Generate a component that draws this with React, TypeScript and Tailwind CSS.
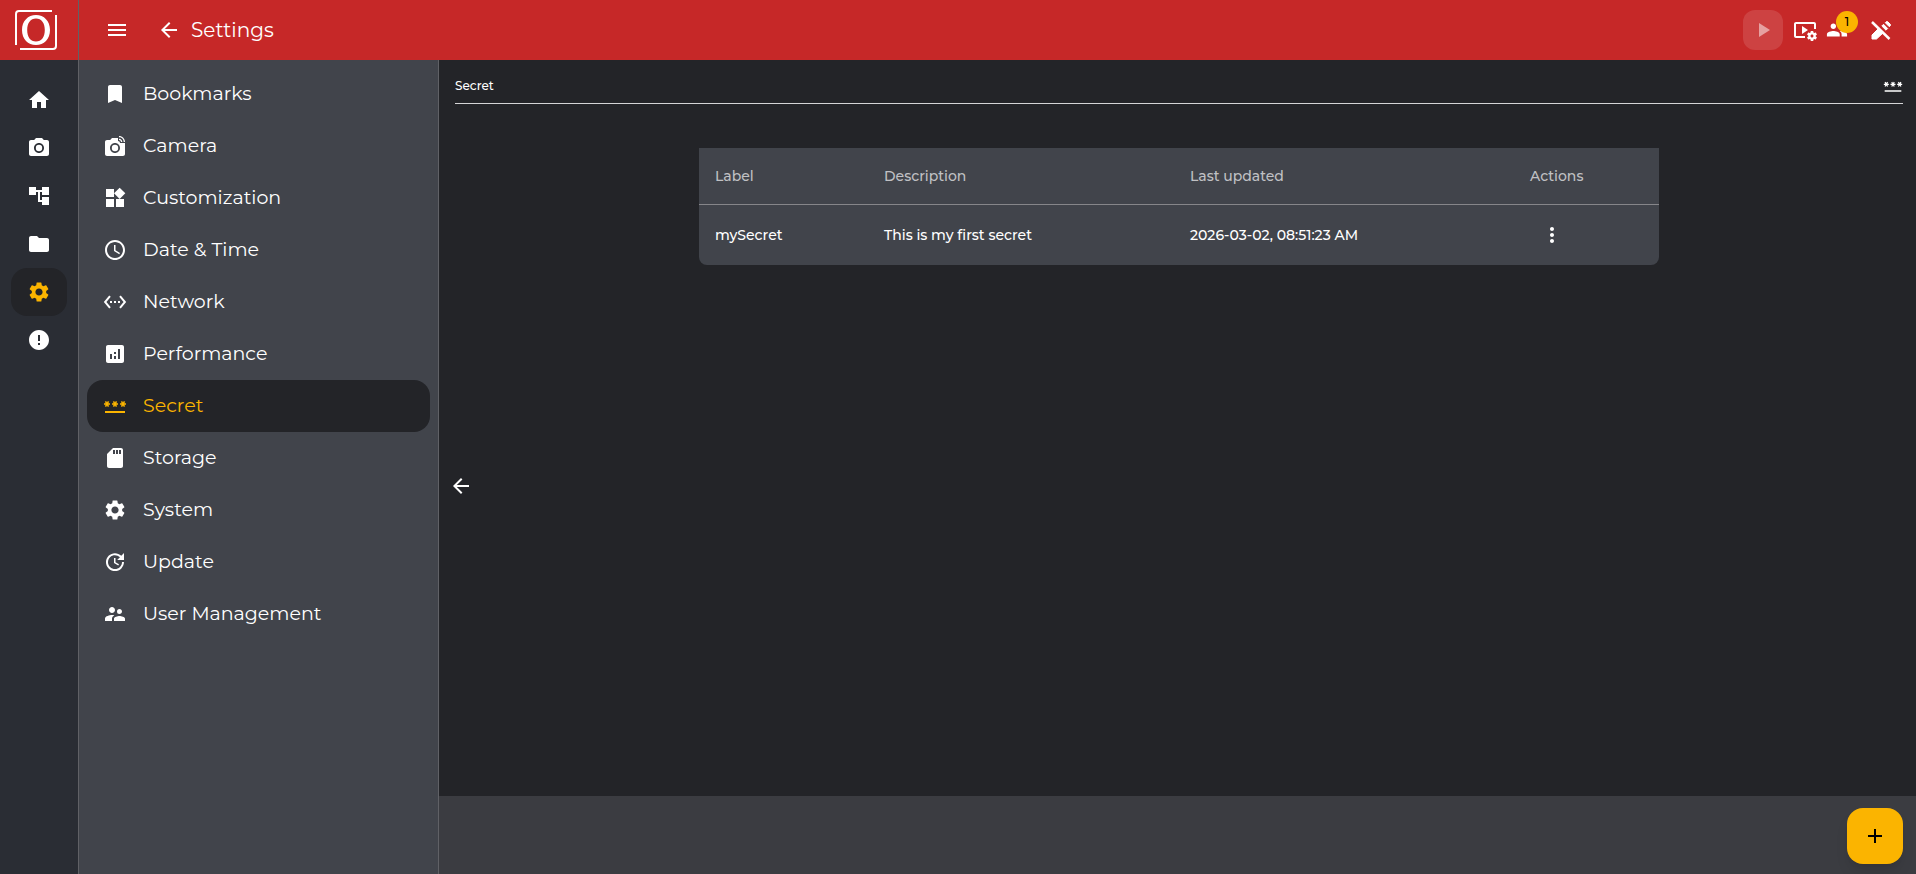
import type { IconType } from 'react-icons';
import {
    MdAccountTree,
    MdAdd,
    MdAnalytics,
    MdArrowBack,
    MdBookmark,
    MdError,
    MdFolder,
    MdGroup,
    MdHome,
    MdLinkedCamera,
    MdMenu,
    MdMoreVert,
    MdPassword,
    MdPhotoCamera,
    MdPlayArrow,
    MdSchedule,
    MdSdCard,
    MdSettings,
    MdSettingsEthernet,
    MdSupervisorAccount,
    MdUpdate,
    MdVideoSettings,
    MdWidgets,
} from 'react-icons/md';

type Item = { label: string; icon: IconType; active?: boolean };

const railItems: Item[] = [
    { label: 'Home', icon: MdHome },
    { label: 'Capture', icon: MdPhotoCamera },
    { label: 'Flows', icon: MdAccountTree },
    { label: 'Files', icon: MdFolder },
    { label: 'Settings', icon: MdSettings, active: true },
    { label: 'Alerts', icon: MdError },
];

const menuItems: Item[] = [
    { label: 'Bookmarks', icon: MdBookmark },
    { label: 'Camera', icon: MdLinkedCamera },
    { label: 'Customization', icon: MdWidgets },
    { label: 'Date & Time', icon: MdSchedule },
    { label: 'Network', icon: MdSettingsEthernet },
    { label: 'Performance', icon: MdAnalytics },
    { label: 'Secret', icon: MdPassword, active: true },
    { label: 'Storage', icon: MdSdCard },
    { label: 'System', icon: MdSettings },
    { label: 'Update', icon: MdUpdate },
    { label: 'User Management', icon: MdSupervisorAccount },
];

const secrets = [
    { label: 'mySecret', description: 'This is my first secret', updated: '2026-03-02, 08:51:23 AM' },
];

function Logo() {
    return (
        <svg viewBox="0 0 42 40" className="w-[42px] h-10" fill="none" stroke="white" strokeWidth="2" aria-hidden="true">
            <path d="M37 1H4a3 3 0 0 0-3 3v31" />
            <path d="M5 39h33a3 3 0 0 0 3-3V5" />
            <path
                fill="white"
                stroke="none"
                fillRule="evenodd"
                d="M21 5c8 0 14 6 14 15s-6 15-14 15S7 29 7 20 13 5 21 5zm0 3.500c-5.500 0-8.800 4.500-8.800 11.500s3.300 11.500 8.800 11.500 8.800-4.500 8.800-11.500S26.500 8.500 21 8.500z"
            />
        </svg>
    );
}

function PencilOffIcon() {
    return (
        <svg viewBox="0 0 24 24" className="w-6 h-6" fill="currentColor" stroke="currentColor" strokeLinejoin="round" aria-hidden="true">
            <path d="M3 17l6.500-6.500 4.500 4.500L7.500 21H3z" strokeWidth="1" />
            <path d="M12.800 8l1.700-1.700 4.200 4.200-1.700 1.700z" strokeWidth="1" />
            <path d="M16.300 4.700l1-1c.4-.4 1-.4 1.400 0l2.600 2.600c.4.4.4 1 0 1.400l-1 1z" strokeWidth="1" />
            <path d="M3 4l17.500 17" fill="none" strokeWidth="2.500" />
        </svg>
    );
}

function Rail() {
    return (
        <aside className="w-[79px] shrink-0 flex flex-col bg-[#2a2d34] border-r border-[#606166]">
            <div className="h-[60px] shrink-0 flex items-center pl-[15px] bg-[#c62828]">
                <Logo />
            </div>
            <nav className="flex flex-col items-center pt-4">
                {railItems.map(({ label, icon: Icon, active }) => (
                    <a
                        key={label}
                        href="#"
                        aria-label={label}
                        className={`w-14 h-12 flex items-center justify-center rounded-2xl ${active ? 'bg-[#232428] text-[#fbb400]' : 'text-white'}`}
                    >
                        <Icon size={24} />
                    </a>
                ))}
            </nav>
        </aside>
    );
}

function TopBar() {
    return (
        <header className="h-[60px] shrink-0 flex items-center bg-[#c62828] text-white pl-[26px] pr-[23px]">
            <button type="button" aria-label="Menu">
                <MdMenu size={24} />
            </button>
            <a href="#" aria-label="Back" className="ml-7">
                <MdArrowBack size={24} />
            </a>
            <h1 className="ml-[10px] text-xl leading-6">Settings</h1>
            <div className="ml-auto flex items-center">
                <button
                    type="button"
                    disabled
                    aria-label="Run"
                    className="w-10 h-10 flex items-center justify-center rounded-xl bg-white/12 text-white/50"
                >
                    <MdPlayArrow size={24} />
                </button>
                <button type="button" aria-label="Video settings" className="ml-[10px]">
                    <MdVideoSettings size={24} />
                </button>
                <button type="button" aria-label="Users" className="relative ml-[9px]">
                    <MdGroup size={22} />
                    <span className="absolute -top-2 left-[10px] w-[22px] h-[22px] flex items-center justify-center rounded-full bg-[#fbb400] text-black text-xs font-medium">
                        1
                    </span>
                </button>
                <button type="button" aria-label="Leave edit mode" className="ml-[21px]">
                    <PencilOffIcon />
                </button>
            </div>
        </header>
    );
}

function SideMenu() {
    return (
        <nav className="w-[360px] shrink-0 px-2 pt-2 bg-[#41444b] border-r border-[#606166]">
            {menuItems.map(({ label, icon: Icon, active }) => (
                <a
                    key={label}
                    href="#"
                    className={`h-[52px] flex items-center gap-4 pl-4 rounded-2xl text-[19px] leading-6 ${active ? 'bg-[#232428] text-[#fbb400]' : 'text-white'}`}
                >
                    <Icon size={24} />
                    {label}
                </a>
            ))}
        </nav>
    );
}

function SecretTable() {
    return (
        <table className="w-[960px] table-fixed mx-auto mt-11 bg-[#41444b] rounded-b-lg text-left text-sm font-medium text-white">
            <colgroup>
                <col className="w-[169px]" />
                <col className="w-[306px]" />
                <col className="w-[340px]" />
                <col className="w-[145px]" />
            </colgroup>
            <thead>
                <tr className="h-14 border-b border-[#86868a] text-[#c0c1c4]">
                    <th className="px-4 font-medium">Label</th>
                    <th className="px-4 font-medium">Description</th>
                    <th className="px-4 font-medium">Last updated</th>
                    <th className="px-4 font-medium">Actions</th>
                </tr>
            </thead>
            <tbody>
                {secrets.map((secret) => (
                    <tr key={secret.label} className="h-[61px]">
                        <td className="px-4">{secret.label}</td>
                        <td className="px-4">{secret.description}</td>
                        <td className="px-4">{secret.updated}</td>
                        <td className="px-4">
                            <button type="button" aria-label="More actions" className="ml-[10px] block">
                                <MdMoreVert size={24} />
                            </button>
                        </td>
                    </tr>
                ))}
            </tbody>
        </table>
    );
}

export default function App() {
    return (
        <div className="min-h-screen flex font-['Montserrat','Inter',sans-serif] bg-[#232428]">
            <Rail />
            <div className="flex-1 min-w-0 flex flex-col">
                <TopBar />
                <div className="flex-1 flex">
                    <SideMenu />
                    <main className="relative flex-1 min-w-0 flex flex-col bg-[#232428]">
                        <div className="flex-1 pl-4 pr-[13px]">
                            <div className="h-11 flex items-center justify-between pt-2 border-b border-[#d5d5d7] text-white">
                                <h2 className="text-xs font-medium">Secret</h2>
                                <MdPassword size={20} />
                            </div>
                            <SecretTable />
                        </div>
                        <button type="button" aria-label="Collapse menu" className="absolute top-[414px] left-[10px] text-white">
                            <MdArrowBack size={24} />
                        </button>
                        <footer className="h-[78px] flex items-center justify-end pt-0.5 pr-[13px] bg-[#3b3c41]">
                            <button
                                type="button"
                                aria-label="Add secret"
                                className="w-14 h-14 flex items-center justify-center rounded-2xl bg-[#fbb400] text-black shadow-lg"
                            >
                                <MdAdd size={24} />
                            </button>
                        </footer>
                    </main>
                </div>
            </div>
        </div>
    );
}
